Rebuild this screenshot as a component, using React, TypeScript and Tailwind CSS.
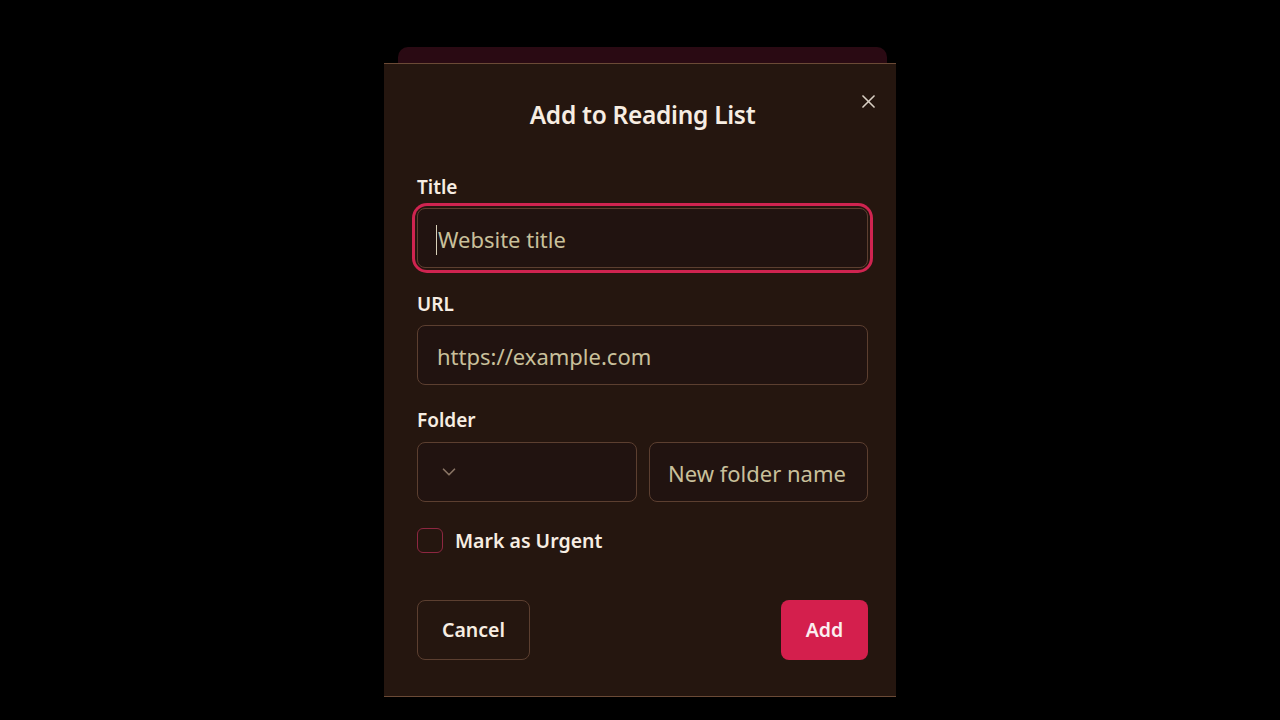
import React from "react";

export default function App() {
  return (
    <div
      className="relative w-[1280px] h-[720px] bg-black overflow-hidden"
      style={{ fontFamily: '"Noto Sans", "Open Sans", sans-serif' }}
    >
      {/* card behind modal */}
      <div className="absolute left-[398px] top-[47px] w-[489px] h-[200px] rounded-[10px] bg-[#2a0a13]" />
      {/* modal */}
      <div className="absolute left-[384px] top-[63px] w-[512px] h-[634px] bg-[#25160f] border-t border-b border-[#6b4a36] pl-[33px] pr-[28px] pt-[31px]">
        <button className="absolute right-[16px] top-[25px] w-6 h-6 flex items-center justify-center text-[#d9cfc4]">
          <svg width="19" height="19" viewBox="0 0 24 24" fill="none" stroke="currentColor" strokeWidth="2" strokeLinecap="round">
            <path d="M5 5l14 14M19 5L5 19" />
          </svg>
        </button>
        <h2 className="text-center text-[24.5px] leading-[40px] font-semibold text-[#f7ede2] tracking-[-0.3px]">
          Add to Reading List
        </h2>

        <label className="block mt-[40px] text-[19px] leading-[24px] font-semibold text-[#f7ede2]">Title</label>
        <div className="mt-[9px] rounded-[10px] ring-[3px] ring-[#cf2450] ring-offset-[2px] ring-offset-[#25160f]">
          <div className="h-[60px] rounded-lg border border-[#5c3f30] bg-[#211310] flex items-center px-[18px] pt-[3px]">
            <span className="w-px h-[30px] bg-[#d8d0b8] mr-px" />
            <span className="text-[22px] text-[#c9c09b]">Website title</span>
          </div>
        </div>

        <label className="block mt-[24px] text-[19px] leading-[24px] font-semibold text-[#f7ede2]">URL</label>
        <div className="mt-[9px] h-[60px] rounded-lg border border-[#5c3f30] bg-[#211310] flex items-center px-[19px] pt-[2px]">
          <span className="text-[22px] text-[#c9c09b]">https://example.com</span>
        </div>

        <label className="block mt-[23px] text-[19px] leading-[24px] font-semibold text-[#f7ede2]">Folder</label>
        <div className="mt-[10px] flex gap-[12px]">
          <div className="w-[220px] h-[60px] rounded-lg border border-[#5c3f30] bg-[#211310] flex items-center pl-[20px]">
            <svg width="22" height="22" viewBox="0 0 24 24" fill="none" stroke="#8a7565" strokeWidth="1.8" strokeLinecap="round" strokeLinejoin="round">
              <path d="M6 9l6 6 6-6" />
            </svg>
          </div>
          <div className="flex-1 h-[60px] rounded-lg border border-[#5c3f30] bg-[#211310] flex items-center px-[18px] pt-[2px]">
            <span className="text-[22px] text-[#c9c09b] whitespace-nowrap">New folder name</span>
          </div>
        </div>

        <div className="mt-[26px] flex items-center gap-[12px]">
          <span className="w-[26px] h-[25px] rounded-[6px] border-[1.5px] border-[#8e2741] bg-[#25160f]" />
          <span className="text-[19.5px] leading-[24px] font-semibold text-[#f7ede2]">Mark as Urgent</span>
        </div>

        <div className="mt-[47px] flex justify-between">
          <button className="w-[113px] h-[60px] rounded-lg border border-[#5c3f30] text-[19.5px] font-semibold text-[#f7ede2]">
            Cancel
          </button>
          <button className="w-[87px] h-[60px] rounded-lg bg-[#d41f4d] text-[19.5px] font-semibold text-[#fbeef0]">
            Add
          </button>
        </div>
      </div>
    </div>
  );
}
